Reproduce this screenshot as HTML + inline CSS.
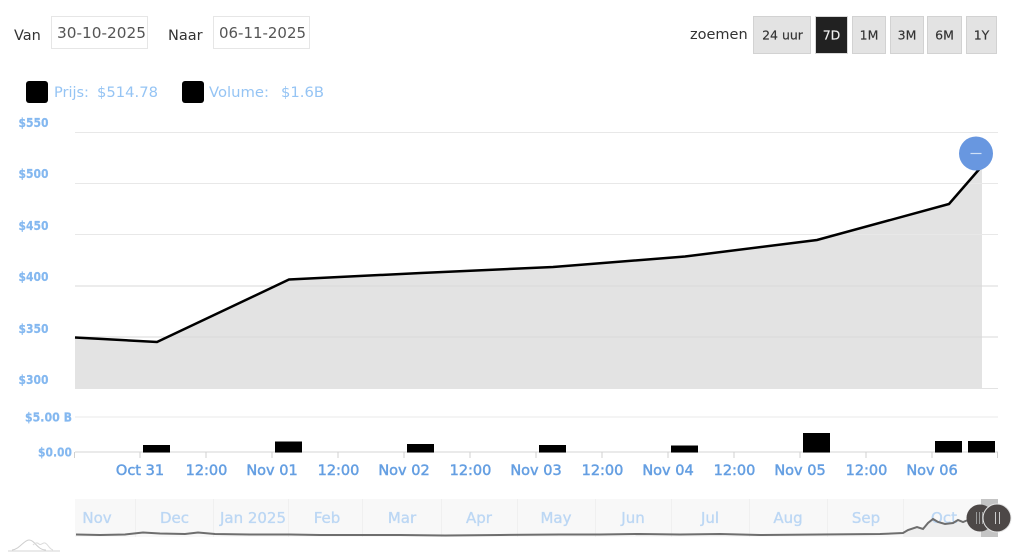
<!DOCTYPE html>
<html>
<head>
<meta charset="utf-8">
<style>
html,body{margin:0;padding:0;background:#fff;width:1024px;height:556px;overflow:hidden}
svg{position:absolute;left:0;top:0}
text{font-family:"DejaVu Sans",sans-serif}
.y{font-size:12.5px;font-weight:bold;fill:#84b8f0;stroke:#84b8f0;stroke-width:.2;text-anchor:end}
.x{font-size:14.5px;fill:#659fe2;stroke:#659fe2;stroke-width:.5;text-anchor:middle}
.n{font-size:15px;fill:#bcd7f4;stroke:#bcd7f4;stroke-width:.35;text-anchor:middle}
.b{font-size:12.5px;fill:#333;stroke:#333;stroke-width:.15;text-anchor:middle}
</style>
</head>
<body>
<svg width="1024" height="556" viewBox="0 0 1024 556">
<defs><clipPath id="c1"><rect x="52" y="17" width="93" height="31"/></clipPath><clipPath id="c2"><rect x="214" y="17" width="91" height="31"/></clipPath></defs>
<!-- date inputs -->
<text x="14" y="40" font-size="14.500" fill="#333">Van</text>
<rect x="51.500" y="16.500" width="96" height="32" fill="#fff" stroke="#e6e6e6"/>
<g clip-path="url(#c1)"><text x="57" y="38" font-size="15" fill="#555" textLength="89" lengthAdjust="spacingAndGlyphs">30-10-2025</text></g>
<text x="168" y="40" font-size="14.500" fill="#333">Naar</text>
<rect x="213.500" y="16.500" width="96" height="32" fill="#fff" stroke="#e6e6e6"/>
<g clip-path="url(#c2)"><text x="219" y="38" font-size="15" fill="#555" textLength="87" lengthAdjust="spacingAndGlyphs">06-11-2025</text></g>

<!-- zoom buttons -->
<text x="690" y="39" font-size="14.500" fill="#333">zoemen</text>
<g fill="#e3e3e3" stroke="#d2d2d2">
<rect x="753.500" y="16.500" width="57" height="37"/>
<rect x="852.500" y="16.500" width="33" height="37"/>
<rect x="890.500" y="16.500" width="33" height="37"/>
<rect x="927.500" y="16.500" width="34" height="37"/>
<rect x="966.500" y="16.500" width="30" height="37"/>
</g>
<rect x="815.500" y="16.500" width="32" height="37" fill="#212121" stroke="#d8d8d8"/>
<text class="b" x="782.500" y="39.500">24 uur</text>
<text class="b" x="831.500" y="39.500" style="fill:#eee;stroke:#eee">7D</text>
<text class="b" x="869" y="39.500">1M</text>
<text class="b" x="907" y="39.500">3M</text>
<text class="b" x="944.500" y="39.500">6M</text>
<text class="b" x="981.500" y="39.500">1Y</text>

<!-- legend -->
<rect x="26" y="81" width="22" height="22" rx="3" fill="#000"/>
<text x="54" y="97" font-size="14.500" fill="#95c4f4">Prijs:</text>
<text x="97" y="97" font-size="14.500" fill="#95c4f4" textLength="61" lengthAdjust="spacingAndGlyphs">$514.78</text>
<rect x="182" y="81" width="22" height="22" rx="3" fill="#000"/>
<text x="209" y="97" font-size="14.500" fill="#95c4f4" textLength="60" lengthAdjust="spacingAndGlyphs">Volume:</text>
<text x="281" y="97" font-size="14.500" fill="#95c4f4" textLength="43" lengthAdjust="spacingAndGlyphs">$1.6B</text>

<!-- price plot -->
<path d="M75 337.500L157 342L289 279.500L421 273L553 267L685 256.500L817 240L949 204L982 166V388H75Z" fill="#e3e3e3"/>
<g stroke="#e8e8e8" stroke-width="1" fill="none">
<path d="M75 132.500H998M75 183.500H998M75 234.500H998"/>
<path d="M75 286H998M75 337H998" stroke="#d8d8d8"/>
<path d="M75 388.500H998" stroke="#e3e3e3"/>
</g>
<path d="M75 337.500L157 342L289 279.500L421 273L553 267L685 256.500L817 240L949 204L982 166" fill="none" stroke="#000" stroke-width="2.500"/>
<circle cx="976" cy="153.500" r="17" fill="#6897e0"/>
<path d="M970.500 153.500H981.500" stroke="#cfe0f7" stroke-width="1.200"/>
<text class="y" x="48.500" y="127" textLength="30" lengthAdjust="spacingAndGlyphs">$550</text>
<text class="y" x="48.500" y="178" textLength="30" lengthAdjust="spacingAndGlyphs">$500</text>
<text class="y" x="48.500" y="230" textLength="30" lengthAdjust="spacingAndGlyphs">$450</text>
<text class="y" x="48.500" y="281" textLength="30" lengthAdjust="spacingAndGlyphs">$400</text>
<text class="y" x="48.500" y="333" textLength="30" lengthAdjust="spacingAndGlyphs">$350</text>
<text class="y" x="48.500" y="384" textLength="30" lengthAdjust="spacingAndGlyphs">$300</text>

<!-- volume -->
<path d="M75 417H998" stroke="#e8e8e8"/>
<path d="M75 452H998" stroke="#e3e3e3" stroke-width="1.500"/>
<text class="y" x="72" y="421.500" textLength="47" lengthAdjust="spacingAndGlyphs">$5.00 B</text>
<text class="y" x="72" y="456.500" textLength="34" lengthAdjust="spacingAndGlyphs">$0.00</text>
<g fill="#000">
<rect x="143" y="445" width="27" height="7.500"/>
<rect x="275" y="441.500" width="27" height="11"/>
<rect x="407" y="444" width="27" height="8.500"/>
<rect x="539" y="445" width="27" height="7.500"/>
<rect x="671" y="445.500" width="27" height="7"/>
<rect x="803" y="433" width="27" height="19.500"/>
<rect x="935" y="441" width="27" height="11.500"/>
<rect x="968" y="441" width="27" height="11.500"/>
</g>
<path d="M74.500 452V458M140 452V458M206 452V458M272 452V458M338 452V458M404 452V458M470 452V458M536 452V458M602 452V458M668 452V458M734 452V458M800 452V458M866 452V458M932 452V458M997.500 452V458" stroke="#d0d0d0" fill="none"/>
<text class="x" x="140" y="475">Oct 31</text>
<text class="x" x="206.500" y="475">12:00</text>
<text class="x" x="272" y="475">Nov 01</text>
<text class="x" x="338.500" y="475">12:00</text>
<text class="x" x="404" y="475">Nov 02</text>
<text class="x" x="470.500" y="475">12:00</text>
<text class="x" x="536" y="475">Nov 03</text>
<text class="x" x="602.500" y="475">12:00</text>
<text class="x" x="668" y="475">Nov 04</text>
<text class="x" x="734.500" y="475">12:00</text>
<text class="x" x="800" y="475">Nov 05</text>
<text class="x" x="866.500" y="475">12:00</text>
<text class="x" x="932" y="475">Nov 06</text>

<!-- navigator -->
<rect x="75" y="499" width="923" height="38" fill="#f8f8f8"/>
<path d="M903 537V533L908 530L917 527L923 529L928 523L933 519L938 522L945 524L953 523L958 520L963 522L968 520L982 518V537Z" fill="#eeeeee"/>
<path d="M135.500 499V537M213.500 499V537M288.500 499V537M362.500 499V537M441.500 499V537M517.500 499V537M595.500 499V537M671.500 499V537M749.500 499V537M827.500 499V537M903.500 499V537" stroke="#f0f0f0"/>
<text class="n" x="97" y="523">Nov</text>
<text class="n" x="174.500" y="523">Dec</text>
<text class="n" x="253" y="523">Jan 2025</text>
<text class="n" x="327" y="523">Feb</text>
<text class="n" x="402" y="523">Mar</text>
<text class="n" x="479" y="523">Apr</text>
<text class="n" x="556" y="523">May</text>
<text class="n" x="633" y="523">Jun</text>
<text class="n" x="710" y="523">Jul</text>
<text class="n" x="788" y="523">Aug</text>
<text class="n" x="866" y="523">Sep</text>
<text class="n" x="944" y="523">Oct</text>
<path d="M76 534.500L100 535L125 534.500L143 532.500L160 533.500L185 534L198 532.500L215 534L250 534.500L290 534.500L320 535L360 535L400 535L445 535.500L500 535L560 534.500L600 534.500L640 534L680 534.500L720 534L760 535L820 534.500L880 534L903 533L908 530L917 527L923 529L928 523L933 519L938 522L945 524L953 523L958 520L963 522L968 520" fill="none" stroke="#6e6e6e" stroke-width="2"/>
<rect x="981" y="499" width="17" height="38" fill="#c4c4c4"/>
<circle cx="980" cy="518" r="13.500" fill="#4d4847"/>
<path d="M976.500 512V524M979.500 512V524M982.500 512V524" stroke="#999" fill="none"/>
<circle cx="997" cy="518" r="14" fill="#4d4847" stroke="#e5e5e5" stroke-width="1"/>
<path d="M995.500 512V524M999.500 512V524" stroke="#ccc" fill="none"/>

<!-- logo -->
<path d="M8 551H60" stroke="#d5d5d5" stroke-width="1"/>
<path d="M12 550C20 549 24 540 29 540C35 540 37 550 46 550" fill="none" stroke="#cfcfcf"/>
<path d="M33 545C35 543 37 542 39 544C41 546 43 542 45 543C48 544 49 549 53 550" fill="none" stroke="#dcdcdc"/>
</svg>
</body>
</html>
